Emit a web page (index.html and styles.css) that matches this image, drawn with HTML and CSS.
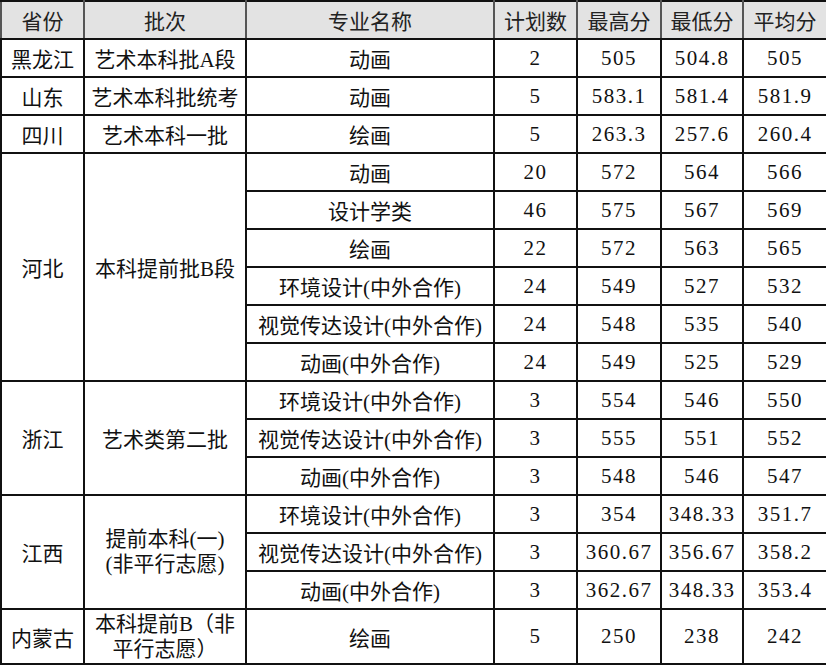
FILE: index.html
```html
<!DOCTYPE html>
<html lang="zh">
<head>
<meta charset="utf-8">
<link rel="stylesheet" href="styles.css">
</head>
<body>
<table class="scores">
<colgroup>
<col class="c1"><col class="c2"><col class="c3"><col class="c4"><col class="c5"><col class="c6"><col class="c7">
</colgroup>
<thead>
<tr><th>省份</th><th>批次</th><th>专业名称</th><th>计划数</th><th>最高分</th><th>最低分</th><th>平均分</th></tr>
</thead>
<tbody>
<tr><td>黑龙江</td><td>艺术本科批A段</td><td>动画</td><td class="n">2</td><td class="n">505</td><td class="n">504.8</td><td class="n">505</td></tr>
<tr><td>山东</td><td>艺术本科批统考</td><td>动画</td><td class="n">5</td><td class="n">583.1</td><td class="n">581.4</td><td class="n">581.9</td></tr>
<tr><td>四川</td><td>艺术本科一批</td><td>绘画</td><td class="n">5</td><td class="n">263.3</td><td class="n">257.6</td><td class="n">260.4</td></tr>
<tr><td rowspan="6">河北</td><td rowspan="6">本科提前批B段</td><td>动画</td><td class="n">20</td><td class="n">572</td><td class="n">564</td><td class="n">566</td></tr>
<tr><td>设计学类</td><td class="n">46</td><td class="n">575</td><td class="n">567</td><td class="n">569</td></tr>
<tr><td>绘画</td><td class="n">22</td><td class="n">572</td><td class="n">563</td><td class="n">565</td></tr>
<tr><td>环境设计(中外合作)</td><td class="n">24</td><td class="n">549</td><td class="n">527</td><td class="n">532</td></tr>
<tr><td>视觉传达设计(中外合作)</td><td class="n">24</td><td class="n">548</td><td class="n">535</td><td class="n">540</td></tr>
<tr><td>动画(中外合作)</td><td class="n">24</td><td class="n">549</td><td class="n">525</td><td class="n">529</td></tr>
<tr><td rowspan="3">浙江</td><td rowspan="3">艺术类第二批</td><td>环境设计(中外合作)</td><td class="n">3</td><td class="n">554</td><td class="n">546</td><td class="n">550</td></tr>
<tr><td>视觉传达设计(中外合作)</td><td class="n">3</td><td class="n">555</td><td class="n">551</td><td class="n">552</td></tr>
<tr><td>动画(中外合作)</td><td class="n">3</td><td class="n">548</td><td class="n">546</td><td class="n">547</td></tr>
<tr><td rowspan="3">江西</td><td rowspan="3" class="wrap">提前本科(一)<br>(非平行志愿)</td><td>环境设计(中外合作)</td><td class="n">3</td><td class="n">354</td><td class="n">348.33</td><td class="n">351.7</td></tr>
<tr><td>视觉传达设计(中外合作)</td><td class="n">3</td><td class="n">360.67</td><td class="n">356.67</td><td class="n">358.2</td></tr>
<tr><td>动画(中外合作)</td><td class="n">3</td><td class="n">362.67</td><td class="n">348.33</td><td class="n">353.4</td></tr>
<tr class="last"><td>内蒙古</td><td class="wrap">本科提前B（非<br>平行志愿）</td><td>绘画</td><td class="n">5</td><td class="n">250</td><td class="n">238</td><td class="n">242</td></tr>
</tbody>
</table>
</body>
</html>
```

FILE: styles.css
```css
html, body {
  margin: 0;
  padding: 0;
  background: #fff;
}

.scores {
  border-collapse: collapse;
  table-layout: fixed;
  width: 826px;
  font-family: "Liberation Serif", "Noto Sans CJK SC", serif;
  font-size: 21px;
  color: #111;
}

.c1 { width: 83px; }
.c2 { width: 162px; }
.c3 { width: 248px; }
.c4 { width: 83px; }
.c5 { width: 84px; }
.c6 { width: 82px; }
.c7 { width: 84px; }

.scores th,
.scores td {
  border: 2px solid #111;
  padding: 0;
  text-align: center;
  vertical-align: middle;
  white-space: nowrap;
  overflow: hidden;
  font-weight: normal;
}

.scores tr {
  height: 38px;
}

.scores th {
  background: #e3e3e3;
  color: #222;
  border-left-color: #555;
  border-right-color: #555;
}

.scores tr.last {
  height: 55px;
}

.scores .wrap {
  line-height: 25px;
}

.scores .n {
  letter-spacing: 1.5px;
}
```
